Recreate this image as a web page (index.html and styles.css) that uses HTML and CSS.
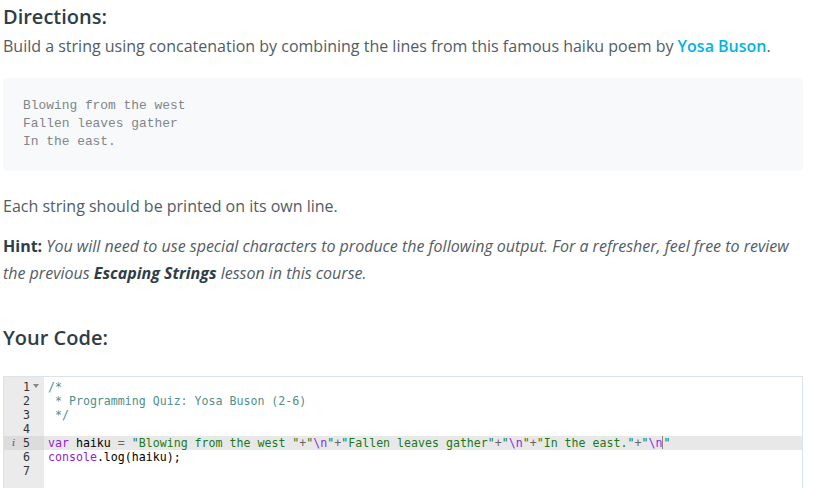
FILE: index.html
```html
<!DOCTYPE html>
<html>
<head>
<meta charset="utf-8">
<link rel="stylesheet" href="styles.css">
</head>
<body>
<div class="page">
  <h3 class="title">Directions:</h3>
  <p class="text">Build a string using concatenation by combining the lines from this famous haiku poem by <a class="link" href="#">Yosa Buson</a>.</p>
  <pre class="poem">Blowing from the west
Fallen leaves gather
In the east.</pre>
  <p class="text each">Each string should be printed on its own line.</p>
  <p class="text hint"><strong class="hint-label">Hint:</strong> <em>You will need to use special characters to produce the following output. For a refresher, feel free to review the previous <strong class="hint-strong">Escaping Strings</strong> lesson in this course.</em></p>
  <h3 class="title code-title">Your Code:</h3>
  <div class="editor">
    <div class="gutter">
      <div class="gl"><span class="num">1</span><span class="fold"></span></div>
      <div class="gl"><span class="num">2</span></div>
      <div class="gl"><span class="num">3</span></div>
      <div class="gl"><span class="num">4</span></div>
      <div class="gl active"><span class="info">i</span><span class="num">5</span></div>
      <div class="gl"><span class="num">6</span></div>
      <div class="gl"><span class="num">7</span></div>
    </div>
    <div class="code">
      <div class="cl"><span class="cm">/*</span></div>
      <div class="cl"><span class="cm"> * Programming Quiz: Yosa Buson (2-6)</span></div>
      <div class="cl"><span class="cm"> */</span></div>
      <div class="cl"> </div>
      <div class="cl active"><span class="kw">var</span> haiku <span class="op">=</span> <span class="str">"Blowing from the west "</span><span class="op">+</span><span class="str">"<span class="esc">\n</span>"</span><span class="op">+</span><span class="str">"Fallen leaves gather"</span><span class="op">+</span><span class="str">"<span class="esc">\n</span>"</span><span class="op">+</span><span class="str">"In the east."</span><span class="op">+</span><span class="str">"<span class="esc">\n</span><span class="cursor"></span>"</span></div>
      <div class="cl"><span class="kw">console</span>.log(haiku);</div>
      <div class="cl"> </div>
    </div>
  </div>
</div>
</body>
</html>
```
FILE: styles.css
```css
html, body {
  margin: 0;
  padding: 0;
  background: #ffffff;
}
.page {
  width: 800px;
  padding: 0 11px 0 3px;
  font-family: "Open Sans", "Liberation Sans", sans-serif;
  color: #525c65;
}
.title {
  margin: 0;
  padding-top: 3px;
  font-size: 20px;
  line-height: 28px;
  font-weight: 600;
  color: #2e3d49;
}
.text {
  margin: 0;
  font-size: 16px;
  line-height: 27px;
}
.text:first-of-type {
  margin-top: 2px;
}
.link {
  color: #02b3e4;
  text-decoration: none;
  font-weight: 600;
}
.poem {
  margin: 18px 0 0 0;
  height: 93px;
  box-sizing: border-box;
  padding: 19px 20px;
  background: #f7f9fb;
  border-radius: 4px;
  font-family: "Liberation Mono", monospace;
  font-size: 12.9px;
  line-height: 18px;
  color: #80858b;
}
.each {
  margin-top: 22px;
}
.hint {
  margin-top: 13px;
}
.hint em {
  font-style: italic;
}
.hint-label {
  font-weight: 700;
  color: #2e3d49;
}
.hint-strong {
  font-weight: 700;
  color: #2e3d49;
}
.code-title {
  margin-top: 34px;
}
.editor {
  margin-top: 24px;
  display: flex;
  border: 1px solid #dbe2e8;
  height: 200px;
  font-family: "DejaVu Sans Mono", monospace;
  font-size: 11.6px;
  line-height: 14px;
  color: #000;
}
.gutter {
  width: 40px;
  background: #ebebeb;
  padding-top: 3px;
  color: #333;
}
.gl {
  position: relative;
  height: 14px;
  display: flex;
  justify-content: flex-end;
  padding-right: 14px;
}
.gl.active {
  background: #dcdcdc;
}
.fold {
  position: absolute;
  right: 5px;
  top: 4px;
  width: 0;
  height: 0;
  border-left: 3px solid transparent;
  border-right: 3px solid transparent;
  border-top: 4px solid #888;
}
.info {
  position: absolute;
  left: 8px;
  top: 0;
  font-family: "DejaVu Serif", serif;
  font-style: italic;
  font-size: 10px;
  color: #555;
}
.code {
  flex: 1;
  padding-top: 3px;
}
.cl {
  height: 14px;
  padding-left: 4px;
  white-space: pre;
}
.cl.active {
  background: #e8e8e8;
}
.cm {
  color: #4e8f8c;
}
.kw {
  color: #9322c9;
}
.op {
  color: #666;
}
.str {
  color: #1a7a1a;
}
.esc {
  color: #8a2be2;
}
.cursor {
  display: inline-block;
  width: 0;
  height: 13px;
  border-left: 1px solid #888;
  vertical-align: top;
}
```
